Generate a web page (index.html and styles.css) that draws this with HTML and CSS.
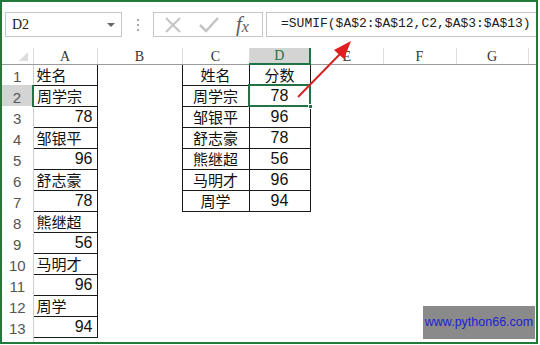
FILE: index.html
```html
<!DOCTYPE html>
<html lang="zh">

<head>
    <meta charset="utf-8">
    <meta name="viewport" content="width=device-width, initial-scale=1.0">
    <title>SUMIF</title>
    <link rel="stylesheet" href="styles.css">
</head>

<body>

    <div class="frame">

        <div class="fbar">
            <div class="namebox">
                <span>D2</span>
                <i class="drop"></i>
            </div>
            <div class="grip">
                <i></i><i></i><i></i>
            </div>
            <div class="btns">
                <svg width="20" height="20" viewBox="0 0 20 20">
                    <path d="M3 3 L17 17 M17 3 L3 17" stroke="#c4c4c4" stroke-width="2" fill="none" />
                </svg>
                <svg width="22" height="20" viewBox="0 0 22 20">
                    <path d="M2 10 L8 16 L20 3" stroke="#c4c4c4" stroke-width="2.5" fill="none" />
                </svg>
                <span class="fx">f<sub>x</sub></span>
            </div>
            <div class="formula">=SUMIF($A$2:$A$12,C2,$A$3:$A$13)</div>
        </div>

        <table class="grid">
            <colgroup>
                <col class="c-row">
                <col class="c-a">
                <col class="c-b">
                <col class="c-c">
                <col class="c-d">
                <col class="c-e">
                <col class="c-f">
                <col class="c-g">
                <col>
            </colgroup>
            <tr class="head">
                <th class="corner"><i></i></th>
                <th>A</th>
                <th>B</th>
                <th>C</th>
                <th class="on">D</th>
                <th>E</th>
                <th>F</th>
                <th>G</th>
                <th class="last"></th>
            </tr>
            <tr>
                <th>1</th>
                <td class="box">姓名</td><td></td>
                <td class="box mid">姓名</td><td class="box mid">分数</td>
                <td></td><td></td><td></td><td></td>
            </tr>
            <tr>
                <th class="on">2</th>
                <td class="box">周学宗</td><td></td>
                <td class="box mid">周学宗</td><td class="box mid num sel">78<b class="handle"></b></td>
                <td></td><td></td><td></td><td></td>
            </tr>
            <tr>
                <th>3</th>
                <td class="box num right">78</td><td></td>
                <td class="box mid">邹银平</td><td class="box mid num">96</td>
                <td></td><td></td><td></td><td></td>
            </tr>
            <tr>
                <th>4</th>
                <td class="box">邹银平</td><td></td>
                <td class="box mid">舒志豪</td><td class="box mid num">78</td>
                <td></td><td></td><td></td><td></td>
            </tr>
            <tr>
                <th>5</th>
                <td class="box num right">96</td><td></td>
                <td class="box mid">熊继超</td><td class="box mid num">56</td>
                <td></td><td></td><td></td><td></td>
            </tr>
            <tr>
                <th>6</th>
                <td class="box">舒志豪</td><td></td>
                <td class="box mid">马明才</td><td class="box mid num">96</td>
                <td></td><td></td><td></td><td></td>
            </tr>
            <tr>
                <th>7</th>
                <td class="box num right">78</td><td></td>
                <td class="box mid">周学</td><td class="box mid num">94</td>
                <td></td><td></td><td></td><td></td>
            </tr>
            <tr>
                <th>8</th>
                <td class="box">熊继超</td><td></td>
                <td></td><td></td><td></td><td></td><td></td><td></td>
            </tr>
            <tr>
                <th>9</th>
                <td class="box num right">56</td><td></td>
                <td></td><td></td><td></td><td></td><td></td><td></td>
            </tr>
            <tr>
                <th>10</th>
                <td class="box">马明才</td><td></td>
                <td></td><td></td><td></td><td></td><td></td><td></td>
            </tr>
            <tr>
                <th>11</th>
                <td class="box num right">96</td><td></td>
                <td></td><td></td><td></td><td></td><td></td><td></td>
            </tr>
            <tr>
                <th>12</th>
                <td class="box">周学</td><td></td>
                <td></td><td></td><td></td><td></td><td></td><td></td>
            </tr>
            <tr>
                <th>13</th>
                <td class="box num right">94</td><td></td>
                <td></td><td></td><td></td><td></td><td></td><td></td>
            </tr>
            <tr>
                <th></th>
                <td></td><td></td><td></td><td></td><td></td><td></td><td></td><td></td>
            </tr>
        </table>

        <svg class="arrow" width="540" height="345" viewBox="0 0 540 345">
            <line x1="298" y1="97" x2="342" y2="52" stroke="#d42424" stroke-width="2" />
            <polygon points="351,41 334,50 344,59" fill="#e01e1e" />
        </svg>

        <div class="mark">www.python66.com</div>
    </div>

</body></html>
```

FILE: styles.css
```css
* {
    margin: 0;
    padding: 0;
    box-sizing: border-box;
}

body {
    background-color: #fff;
    font-family: "Liberation Sans", Arial, sans-serif;
}

.frame {
    position: relative;
    width: 538px;
    height: 344px;
    border: 2px solid #217a3c;
    overflow: hidden;
    background-color: #fff;
}

/* formula bar */

.fbar {
    display: flex;
    align-items: center;
    height: 25px;
    margin-top: 10px;
    padding-left: 3px;
}

.namebox {
    display: flex;
    align-items: center;
    justify-content: space-between;
    width: 117px;
    height: 25px;
    border: 1px solid #c6c6c6;
    padding: 0 6px 0 6px;
    font-family: "Liberation Serif", serif;
    font-size: 14px;
    color: #222;
}

.drop {
    width: 0;
    height: 0;
    border-left: 4px solid transparent;
    border-right: 4px solid transparent;
    border-top: 4px solid #666;
}

.grip {
    display: flex;
    flex-direction: column;
    gap: 3px;
    width: 31px;
    align-items: center;
}

.grip i {
    width: 2px;
    height: 2px;
    background-color: #a8a8a8;
}

.btns {
    display: flex;
    align-items: center;
    gap: 15px;
    width: 110px;
    height: 25px;
    border: 1px solid #c6c6c6;
    padding-left: 9px;
}

.fx {
    font-family: "Liberation Serif", serif;
    font-style: italic;
    font-size: 21px;
    color: #5e5e5e;
    margin-left: 1px;
}

.fx sub {
    font-size: 16px;
    vertical-align: -1px;
}

.formula {
    flex: 1;
    height: 25px;
    margin-left: 3px;
    border: 1px solid #c6c6c6;
    border-right: none;
    padding-left: 14px;
    line-height: 22px;
    font-family: "Liberation Mono", monospace;
    font-size: 13px;
    color: #222;
    white-space: nowrap;
}

/* sheet */

.grid {
    margin-top: 11px;
    border-collapse: collapse;
    table-layout: fixed;
    width: 560px;
}

.c-row { width: 31px; }
.c-a { width: 64px; }
.c-b { width: 85px; }
.c-c { width: 67px; }
.c-d { width: 61px; }
.c-e { width: 73px; }
.c-f { width: 73px; }
.c-g { width: 72px; }

.grid tr {
    height: 21px;
}

.grid tr.head {
    height: 16px;
}

.head th {
    font-family: "Liberation Serif", serif;
    font-size: 14px;
    font-weight: normal;
    color: #333;
    border-right: 1px solid #dcdcdc;
    border-bottom: 1px solid #9b9b9b;
    line-height: 14px;
}

.head th.last {
    border-right: none;
}

.head th.on {
    background-color: #d4d4d4;
    color: #217346;
    border-bottom: 2px solid #217346;
}

.corner {
    position: relative;
}

.corner i {
    position: absolute;
    right: 5px;
    bottom: 3px;
    width: 0;
    height: 0;
    border-left: 9px solid transparent;
    border-bottom: 9px solid #dcdcdc;
}

tr th {
    font-family: "Liberation Sans", Arial, sans-serif;
    font-size: 15px;
    font-weight: normal;
    color: #555;
    text-align: center;
    vertical-align: bottom;
    padding-bottom: 0;
    border-right: 1px solid #cfcfcf;
}

tr th.on {
    background-color: #d4d4d4;
    border-right: 2px solid #217346;
}

td {
    font-family: "Noto Sans CJK SC", sans-serif;
    font-size: 15px;
    color: #111;
    padding: 0 3px 0 3px;
    white-space: nowrap;
    vertical-align: middle;
    line-height: 18px;
}

td.box {
    border: 1px solid #1a1a1a;
}

td.mid {
    text-align: center;
}

td.right {
    text-align: right;
    padding-right: 4px;
}

td.num {
    font-family: "Liberation Sans", Arial, sans-serif;
    font-size: 16px;
    vertical-align: bottom;
    padding-bottom: 1px;
}

td.sel {
    position: relative;
    outline: 2px solid #217346;
    outline-offset: -1px;
}

.handle {
    position: absolute;
    right: -3px;
    bottom: -3px;
    width: 5px;
    height: 5px;
    background-color: #217346;
    border: 1px solid #fff;
}

.arrow {
    position: absolute;
    left: -2px;
    top: -2px;
}

.mark {
    position: absolute;
    left: 421px;
    top: 304px;
    width: 112px;
    height: 33px;
    background-color: #8a8a8a;
    color: #1e1ed2;
    font-family: "Liberation Sans", Arial, sans-serif;
    font-size: 12.5px;
    line-height: 33px;
    text-align: center;
}
```
